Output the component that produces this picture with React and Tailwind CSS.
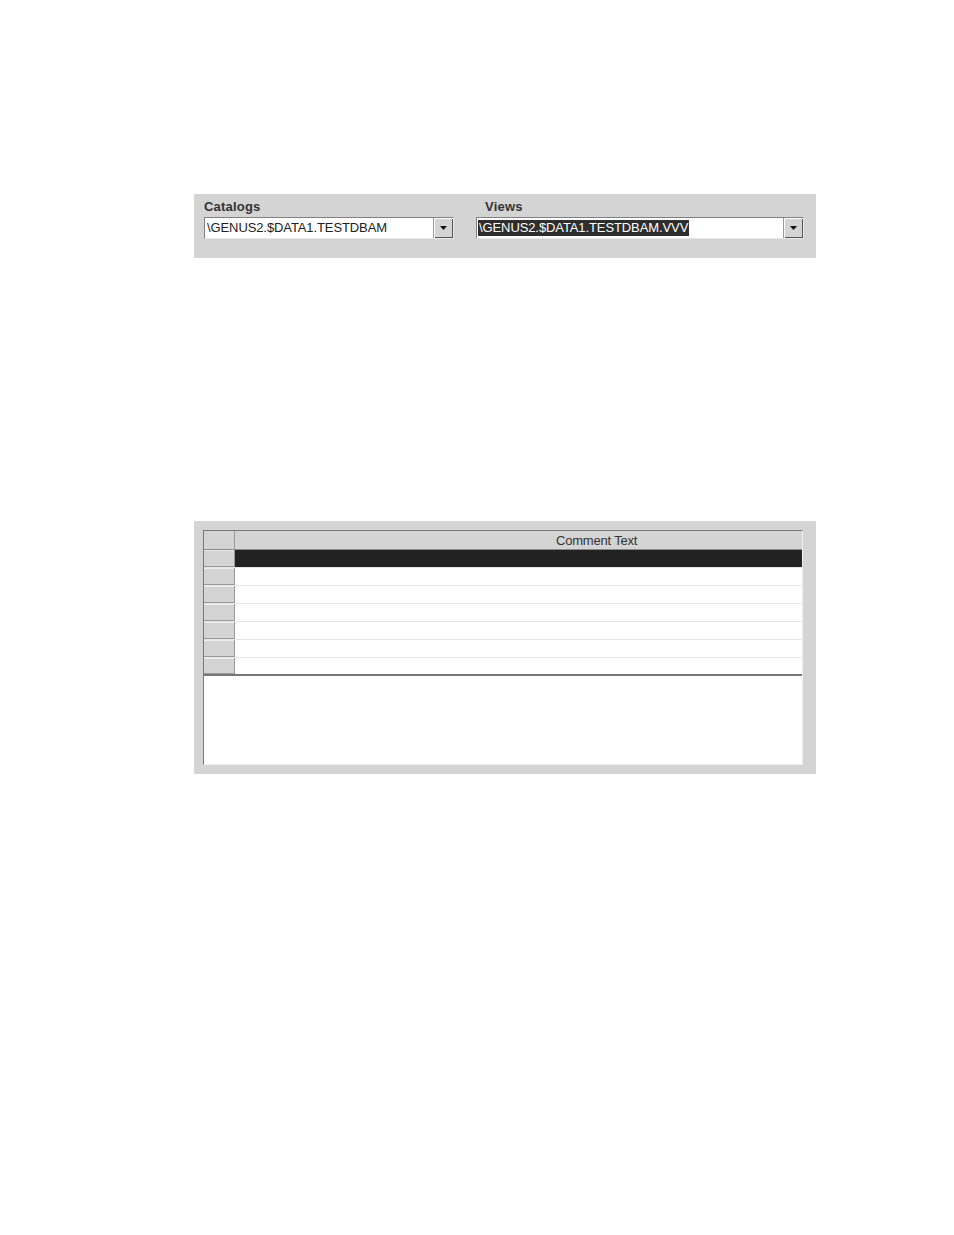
import React from "react";

const font = { fontFamily: '"Liberation Sans", Arial, sans-serif' };

function DropButton() {
  return (
    <div className="flex h-full w-[20px] items-center justify-center border-l border-[#9a9a9a] bg-[#d4d4d4] shadow-[inset_1px_1px_0_#ffffff,inset_-1px_-1px_0_#555555]">
      <svg width="8" height="5" viewBox="0 0 8 5">
        <path d="M0 0 H7 L3.5 4 Z" fill="#111" />
      </svg>
    </div>
  );
}

function Combo({ value, selected, width }) {
  return (
    <div
      className={`flex h-[22px] items-stretch border border-t-[#808080] border-l-[#808080] border-r-[#e8e8e8] border-b-[#e8e8e8] bg-white ${width}`}
    >
      <div className="flex flex-1 items-center overflow-hidden pl-[1px]">
        {selected ? (
          <span className="bg-[#2e2e2e] px-[1px] text-[13px] leading-[16px] tracking-[-0.1px] text-white">
            {value}
          </span>
        ) : (
          <span className="pl-[1px] text-[13px] leading-[16px] tracking-[-0.1px] text-[#222]">
            {value}
          </span>
        )}
      </div>
      <DropButton />
    </div>
  );
}

const rows = [0, 1, 2, 3, 4, 5, 6];

export default function App() {
  return (
    <div className="min-h-[1235px] w-[954px] bg-white pt-[194px]" style={font}>
      {/* Catalog / view selectors */}
      <div className="ml-[194px] flex h-[64px] w-[622px] gap-[22px] bg-[#d4d4d4] pl-[10px] pt-[5px]">
        <div className="flex flex-col">
          <div className="h-[18px] text-[13px] font-bold leading-[16px] tracking-[0.2px] text-[#333]">Catalogs</div>
          <Combo value="\GENUS2.$DATA1.TESTDBAM" width="w-[250px]" />
        </div>
        <div className="flex flex-col">
          <div className="h-[18px] pl-[9px] text-[13px] font-bold leading-[16px] tracking-[0.2px] text-[#333]">Views</div>
          <Combo value="\GENUS2.$DATA1.TESTDBAM.VVV" selected width="w-[328px]" />
        </div>
      </div>

      {/* Comment grid */}
      <div className="ml-[194px] mt-[263px] w-[622px] bg-[#d4d4d4] pb-[9px] pl-[9px] pr-[13px] pt-[9px]">
        <div className="flex h-[235px] flex-col border border-t-[#777] border-l-[#777] border-r-[#eee] border-b-[#eee] bg-white">
          <div className="flex h-[19px] border-b border-[#888] bg-[#d4d4d4]">
            <div className="w-[31px] border-r border-[#999]" />
            <div className="flex-1 pl-[321px] text-[13px] leading-[19px] tracking-[-0.2px] text-[#333]">
              Comment Text
            </div>
          </div>
          {rows.map((r) => (
            <div
              key={r}
              className={`flex h-[18px] ${r === 6 ? "border-b-2 border-[#777]" : "border-b border-[#e6e6e6]"}`}
            >
              <div className="w-[31px] border-r border-b border-[#999] bg-[#d4d4d4] shadow-[inset_0_1px_0_#ececec]" />
              <div className={`flex-1 ${r === 0 ? "bg-[#222]" : "bg-white"}`} />
            </div>
          ))}
          <div className="flex-1 bg-white" />
        </div>
      </div>
    </div>
  );
}
